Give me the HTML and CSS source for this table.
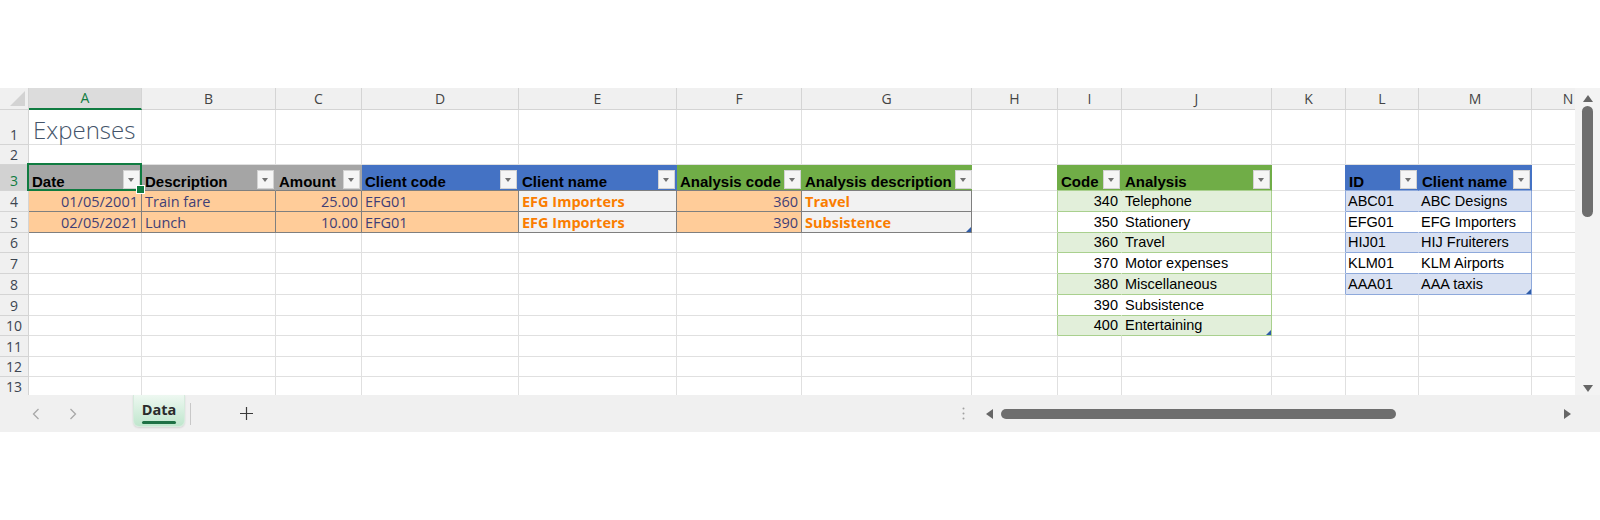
FILE: index.html
```html
<!DOCTYPE html>
<html lang="en">
<head>
<meta charset="utf-8">
<title>Expenses - Excel</title>
<link rel="stylesheet" href="styles.css">
</head>
<body>
<div class="page">
  <div class="excel">
    <div class="main">
      <div class="viewport">
        <div class="sheet">
          <!-- column headers -->
          <div class="corner"></div><div class="ch on">A</div><div class="ch">B</div><div class="ch">C</div><div class="ch">D</div><div class="ch">E</div><div class="ch">F</div><div class="ch">G</div><div class="ch">H</div><div class="ch">I</div><div class="ch">J</div><div class="ch">K</div><div class="ch">L</div><div class="ch">M</div><div class="ch">N</div>
          <!-- row 1 -->
          <div class="rh">1</div><div class="title">Expenses</div><div></div><div></div><div></div><div></div><div></div><div></div><div></div><div></div><div></div><div></div><div></div><div></div><div></div>
          <!-- row 2 -->
          <div class="rh">2</div><div></div><div></div><div></div><div></div><div></div><div></div><div></div><div></div><div></div><div></div><div></div><div></div><div></div><div></div>
          <!-- row 3 -->
          <div class="rh on">3</div>
          <div class="th gy t1 sel"><span>Date</span><span class="fb"></span></div>
          <div class="th gy t1"><span>Description</span><span class="fb"></span></div>
          <div class="th gy t1"><span>Amount</span><span class="fb"></span></div>
          <div class="th bl t1"><span>Client code</span><span class="fb"></span></div>
          <div class="th bl t1"><span>Client name</span><span class="fb"></span></div>
          <div class="th gr t1"><span>Analysis code</span><span class="fb"></span></div>
          <div class="th gr t1"><span>Analysis description</span><span class="fb"></span></div>
          <div class="l2h"></div>
          <div class="th gr t2h"><span>Code</span><span class="fb"></span></div>
          <div class="th gr t2h"><span>Analysis</span><span class="fb"></span></div>
          <div class="l3h"></div>
          <div class="th bl t3h"><span>ID</span><span class="fb"></span></div>
          <div class="th bl t3h"><span>Client name</span><span class="fb"></span></div>
          <div></div>
          <!-- row 4 -->
          <div class="rh">4</div>
          <div class="in r">01/05/2001</div><div class="in">Train fare</div><div class="in r">25.00</div><div class="in">EFG01</div><div class="calc">EFG Importers</div><div class="in r">360</div><div class="calc">Travel</div>
          <div class="l2"></div><div class="t2 g1 ti r">340</div><div class="t2 g1 tj">Telephone</div>
          <div class="l3"></div><div class="t3 b1 tl">ABC01</div><div class="t3 b1 tm">ABC Designs</div><div></div>
          <!-- row 5 -->
          <div class="rh">5</div>
          <div class="in r">02/05/2021</div><div class="in">Lunch</div><div class="in r">10.00</div><div class="in">EFG01</div><div class="calc">EFG Importers</div><div class="in r">390</div><div class="calc rs">Subsistence</div>
          <div class="l2"></div><div class="t2 ti r">350</div><div class="t2 tj">Stationery</div>
          <div class="l3"></div><div class="t3 tl">EFG01</div><div class="t3 tm">EFG Importers</div><div></div>
          <!-- row 6 -->
          <div class="rh">6</div><div></div><div></div><div></div><div></div><div></div><div></div><div></div>
          <div class="l2"></div><div class="t2 g1 ti r">360</div><div class="t2 g1 tj">Travel</div>
          <div class="l3"></div><div class="t3 b1 tl">HIJ01</div><div class="t3 b1 tm">HIJ Fruiterers</div><div></div>
          <!-- row 7 -->
          <div class="rh">7</div><div></div><div></div><div></div><div></div><div></div><div></div><div></div>
          <div class="l2"></div><div class="t2 ti r">370</div><div class="t2 tj">Motor expenses</div>
          <div class="l3"></div><div class="t3 tl">KLM01</div><div class="t3 tm">KLM Airports</div><div></div>
          <!-- row 8 -->
          <div class="rh">8</div><div></div><div></div><div></div><div></div><div></div><div></div><div></div>
          <div class="l2"></div><div class="t2 g1 ti r">380</div><div class="t2 g1 tj">Miscellaneous</div>
          <div class="l3"></div><div class="t3 b1 tl">AAA01</div><div class="t3 b1 tm rs">AAA taxis</div><div></div>
          <!-- row 9 -->
          <div class="rh">9</div><div></div><div></div><div></div><div></div><div></div><div></div><div></div>
          <div class="l2"></div><div class="t2 ti r">390</div><div class="t2 tj">Subsistence</div>
          <div></div><div></div><div></div><div></div>
          <!-- row 10 -->
          <div class="rh">10</div><div></div><div></div><div></div><div></div><div></div><div></div><div></div>
          <div class="l2"></div><div class="t2 g1 ti r">400</div><div class="t2 g1 tj rs">Entertaining</div>
          <div></div><div></div><div></div><div></div>
          <!-- row 11 -->
          <div class="rh">11</div><div></div><div></div><div></div><div></div><div></div><div></div><div></div><div></div><div></div><div></div><div></div><div></div><div></div><div></div>
          <!-- row 12 -->
          <div class="rh">12</div><div></div><div></div><div></div><div></div><div></div><div></div><div></div><div></div><div></div><div></div><div></div><div></div><div></div><div></div>
          <!-- row 13 -->
          <div class="rh">13</div><div></div><div></div><div></div><div></div><div></div><div></div><div></div><div></div><div></div><div></div><div></div><div></div><div></div><div></div>
        </div>
      </div>
      <div class="vscroll">
        <span class="tri-up"></span>
        <span class="vthumb"></span>
        <span class="vspace"></span>
        <span class="tri-down"></span>
      </div>
    </div>
    <div class="bottombar">
      <svg class="nav prev" width="8" height="12" viewBox="0 0 8 12"><path d="M6.5 1 L1.5 6 L6.5 11" fill="none" stroke="#a8a8a8" stroke-width="1.3"/></svg>
      <svg class="nav next" width="8" height="12" viewBox="0 0 8 12"><path d="M1.5 1 L6.5 6 L1.5 11" fill="none" stroke="#a8a8a8" stroke-width="1.3"/></svg>
      <div class="tab"><span class="tabtext">Data</span><span class="tabline"></span></div>
      <span class="sep"></span>
      <svg class="plus" width="13" height="13" viewBox="0 0 13 13"><path d="M6.5 0 V13 M0 6.5 H13" stroke="#3a3a3a" stroke-width="1.2"/></svg>
      <div class="hs">
        <svg class="dots" width="3" height="13" viewBox="0 0 3 13"><circle cx="1.5" cy="1.5" r="1" fill="#a0a0a0"/><circle cx="1.5" cy="6.5" r="1" fill="#a0a0a0"/><circle cx="1.5" cy="11.5" r="1" fill="#a0a0a0"/></svg>
        <span class="tri-left"></span>
        <span class="hthumb"></span>
        <span class="tri-right"></span>
      </div>
    </div>
  </div>
</div>
</body>
</html>
```

FILE: styles.css
```css
* { box-sizing: border-box; margin: 0; padding: 0; }
body { background: #fff; font-family: "Open Sans", "Noto Sans", sans-serif; }
.page { padding-top: 88px; }
.excel { width: 1600px; }

.main { display: flex; height: 307px; background: #f2f2f2; }
.viewport { width: 1575px; flex: none; overflow: hidden; background: #fff; }
.sheet {
  display: grid;
  width: 1621px;
  grid-template-columns: 29px 113px 134px 86px 157px 158px 125px 170px 86px 64px 150px 74px 73px 113px 73px;
  grid-template-rows: 22px 35px 20px 26px 21px 21px 20px 21px 21px 21px 20px 21px 20px 20px;
}
.sheet > div {
  position: relative;
  display: flex;
  align-items: flex-end;
  min-width: 0;
  padding: 0 3px 0;
  border-right: 1px solid #e0e0e0;
  border-bottom: 1px solid #e0e0e0;
  white-space: nowrap;
  font-size: 14.5px;
  line-height: 18px;
}
.sheet > .r { justify-content: flex-end; }

/* headers */
.sheet > .corner { background: #f0f0f0; border-color: #d4d4d4; }
.corner::after {
  content: ""; position: absolute; right: 3px; bottom: 3px;
  border-left: 15px solid transparent; border-bottom: 15px solid #d3d3d3;
}
.sheet > .ch {
  justify-content: center; align-items: center; padding: 0;
  background: #f0f0f0; border-color: #d4d4d4; color: #444; font-size: 14px;
}
.sheet > .ch.on { background: #dcdcdc; color: #107c41; border-bottom: 2px solid #107c41; }
.sheet > .rh {
  justify-content: center; padding: 0;
  background: #f0f0f0; border-color: #d4d4d4; color: #3c4550; font-size: 14px;
}
.sheet > .rh.on { background: #d2d2d2; color: #107c41; }

.sheet > .title {
  font-weight: 300; font-size: 24px; line-height: 28px; color: #44546a; padding-left: 4px;
}

/* table headers */
.sheet > .th {
  justify-content: space-between;
  padding: 0 1px 1px 3px;
  font-family: "Liberation Sans", Arial, sans-serif;
  font-weight: 700; font-size: 15px; line-height: 14px; color: #000;
}
.fb {
  position: relative; flex: none; width: 17px; height: 19px; margin-left: 3px;
  background: #f5f5f5; border: 1px solid #d2d2d2;
}
.fb::after {
  content: ""; position: absolute; left: 4px; top: 7px;
  border-left: 3.5px solid transparent; border-right: 3.5px solid transparent;
  border-top: 4px solid #707070;
}
.sheet > .gy { background: #a5a5a5; border-right-color: #a5a5a5; }
.sheet > .bl { background: #4472c4; border-right-color: #4472c4; }
.sheet > .gr { background: #70ad47; border-right-color: #70ad47; }
.sheet > .t1 { border-bottom-color: #7f7f7f; }
.sheet > .t2h { border-bottom-color: #a9d08e; }
.sheet > .t2h + .t2h { border-right-color: #70ad47; }
.sheet > .t3h { border-bottom-color: #8ea9db; }

/* selection */
.sheet > .sel { z-index: 3; }
.sel::before {
  content: ""; position: absolute; left: -2px; top: -2px; right: -1px; bottom: -1px;
  border: 2px solid #107c41;
}
.sel::after {
  content: ""; position: absolute; right: -4px; bottom: -4px; width: 7px; height: 7px;
  background: #107c41; border: 1px solid #fff;
}

/* input / calculation styles */
.sheet > .in { background: #ffcc99; color: #3f3f76; border-color: #7f7f7f; }
.sheet > .calc { background: #f2f2f2; color: #fa7d00; font-weight: 700; border-color: #7f7f7f; }

/* lookup tables */
.sheet > .t2, .sheet > .t3 {
  font-family: "Liberation Sans", Arial, sans-serif; font-size: 14.5px; color: #000;
  padding-bottom: 1px;
}
.sheet > .t2 { border-bottom-color: #a9d08e; }
.sheet > .t3 { border-bottom-color: #8ea9db; padding-left: 2px; }
.sheet > .g1 { background: #e2efda; }
.sheet > .b1 { background: #d9e1f2; }
.sheet > .ti, .sheet > .tl { border-right-color: transparent; }
.sheet > .tj { border-right-color: #a9d08e; }
.sheet > .tm { border-right-color: #8ea9db; }
.sheet > .l2 { border-right-color: #a9d08e; }
.sheet > .l2h { border-right-color: #70ad47; }
.sheet > .l3 { border-right-color: #8ea9db; }
.sheet > .l3h { border-right-color: #4472c4; }

.rs::after {
  content: ""; position: absolute; right: 0; bottom: 0;
  border-left: 5px solid transparent; border-bottom: 5px solid #2e5ca8;
}

/* vertical scrollbar */
.vscroll { width: 25px; flex: none; display: flex; flex-direction: column; align-items: center; background: #f3f3f3; }
.tri-up { margin-top: 7px; border-left: 5px solid transparent; border-right: 5px solid transparent; border-bottom: 7px solid #666; }
.vthumb { margin-top: 4px; width: 11px; height: 111px; border-radius: 6px; background: #6e6e6e; }
.vspace { flex: 1; }
.tri-down { margin-bottom: 3px; border-left: 5px solid transparent; border-right: 5px solid transparent; border-top: 7px solid #666; }

/* bottom bar */
.bottombar { display: flex; align-items: center; height: 37px; background: #f0f0f0; }
.nav.prev { margin-left: 32px; }
.nav.next { margin-left: 29px; }
.tab {
  align-self: flex-start; margin-left: 56px; width: 52px; height: 32px;
  display: flex; flex-direction: column; align-items: center; justify-content: flex-end;
  background: linear-gradient(#eef8f1, #bfe6cd);
  border: 1px solid #d6ebdd; border-top: none;
  border-radius: 0 0 6px 6px;
  box-shadow: 0 1px 2px rgba(0,0,0,0.12);
}
.tabtext { font-weight: 700; font-size: 14.5px; line-height: 18px; color: #2b2b2b; }
.tabline { width: 34px; height: 3px; margin: 2px 0 2px; border-radius: 2px; background: #1e7145; }
.sep { margin-left: 5px; width: 1px; height: 22px; background: #c8c8c8; }
.plus { margin-left: 49px; }
.hs { margin-left: auto; width: 645px; height: 37px; display: flex; align-items: center; }
.dots { margin-left: 7px; }
.tri-left { margin-left: 21px; border-top: 5px solid transparent; border-bottom: 5px solid transparent; border-right: 7px solid #666; }
.hthumb { margin-left: 8px; width: 395px; height: 10px; border-radius: 5px; background: #6e6e6e; }
.tri-right { margin-left: auto; margin-right: 29px; border-top: 5px solid transparent; border-bottom: 5px solid transparent; border-left: 7px solid #666; }
```
